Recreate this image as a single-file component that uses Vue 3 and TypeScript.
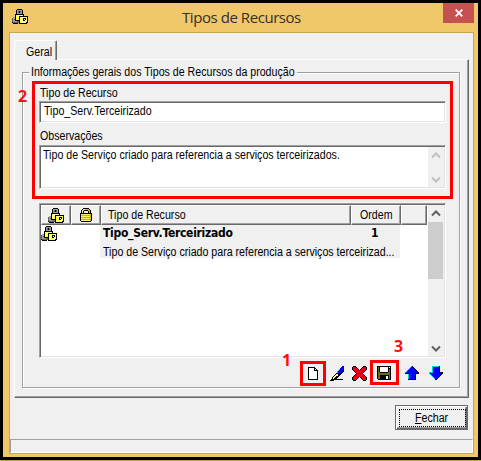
<script setup lang="ts">
interface Pixel {
  x: number
  y: number
  fill: string
}

const palette: Record<string, string> = {
  K: '#000000',
  G: '#a0a0a4',
  D: '#606060',
  Y: '#ffff50',
  W: '#ffffff',
  O: '#e0a820',
  L: '#fff27a',
  B: '#0000ff',
  C: '#00d0d8',
  R: '#e80018',
  M: '#6c6c10',
}

// Each icon is a small bitmap: one string per row, one palette letter per pixel.
const bitmaps: Record<string, string[]> = {
  resource: [
    '.....KKKKK......',
    '....KGGGGGK.....',
    '....KGDKDGK.....',
    '....KGDKDGK.....',
    '....KGGGGGK.....',
    '...KKKKKKKKK....',
    '...KYYWYYWYK....',
    '...KYWYKKKKKKKKK',
    '.GGKYYYKYYWYYWYK',
    'DGGKYWYKYWYKKKYK',
    'DGDKYYYKYYYKWKYK',
    'DGGKKKKKYWYKKYYK',
    'DGGGGDDKYYYYYWYK',
    'KDDDDDDKYYWYYYKK',
    '.KKKKK.KKKKKKKK.',
  ],
  lock: [
    '...KKKKKK...',
    '..KLLOOOOK..',
    '.KLOKKKKOOK.',
    '.KLK....KOK.',
    '.KLK....KOK.',
    'KKKKKKKKKKKK',
    'KLLLLLLYYYOK',
    'KOOOOOOOOOOK',
    'KLLLLLYYYYOK',
    'KOOOOOOOOOOK',
    'KLLLLLYYYYOK',
    'KOOOOOOOOOOK',
    'KLLLLYYYYYOK',
    '.KKKKKKKKKK.',
  ],
  page: [
    'KKKKKKK...',
    'KWWWWWKK..',
    'KWWWWWKWK.',
    'KWWWWWKKKK',
    'KWWWWWWWWK',
    'KWWWWWWWWK',
    'KWWWWWWWWK',
    'KWWWWWWWWK',
    'KWWWWWWWWK',
    'KWWWWWWWWK',
    'KWWWWWWWWK',
    'KWWWWWWWWK',
    'KKKKKKKKKK',
  ],
  pen: [
    '............BB',
    '...........BBB',
    '..........BBBB',
    '.........CBBBB',
    '........CBBBBK',
    '.......CBBBBBK',
    '.......CBBBBK.',
    '......KKBBKK..',
    '.....KLLKKK...',
    '....KLLLKK....',
    '...KLLKKK.....',
    '..KLLKKK......',
    '..KLKKK.......',
    '.KKKKKKKKKKKK.',
    'KKKK..........',
  ],
  remove: [
    '.KKK.......KKK.',
    'KRRRK.....KRRRK',
    'KRRRRK...KRRRRK',
    'KRRRRRK.KRRRRRK',
    '.KRRRRRKRRRRRK.',
    '..KRRRRRRRRRK..',
    '...KRRRRRRRK...',
    '....KRRRRRK....',
    '...KRRRRRRRK...',
    '..KRRRRRRRRRK..',
    '.KRRRRRKRRRRRK.',
    'KRRRRRK.KRRRRRK',
    'KRRRRK...KRRRRK',
    'KRRRK.....KRRRK',
    '.KKK.......KKK.',
  ],
  save: [
    'KKKKKKKKKKKKKK',
    'KMKWWWWWWWWKWK',
    'KMKWWWWWWWWKKK',
    'KMKWWWWWWWWKMK',
    'KMKWWWWWWWWKMK',
    'KMKWWWWWWWWKMK',
    'KMMKKKKKKKKMMK',
    'KMMMMMMMMMMMMK',
    'KMMMMMMMMMMMMK',
    'KMMKKKKKKKKKMK',
    'KMMKKKKKKWWKMK',
    'KMMKKKKKKWWKMK',
    'KMMKKKKKKWWKMK',
    '.KKKKKKKKKKKKK',
  ],
  up: [
    '......CK......',
    '.....CBBK.....',
    '....CBBBBK....',
    '...CBBBBBBK...',
    '..CBBBBBBBBK..',
    '.CBBBBBBBBBBK.',
    'CBBBBBBBBBBBBK',
    'KKKKBBBBBBKKKK',
    '...CBBBBBBK...',
    '...CBBBBBBK...',
    '...CBBBBBBK...',
    '...CBBBBBBK...',
    '...CBBBBBBK...',
    '...KKKKKKKK...',
  ],
  down: [
    '...CCCCCCCK...',
    '...CBBBBBBK...',
    '...CBBBBBBK...',
    '...CBBBBBBK...',
    '...CBBBBBBK...',
    '...CBBBBBBK...',
    'CCCCBBBBBBKKKK',
    'CBBBBBBBBBBBBK',
    '.CBBBBBBBBBBK.',
    '..CBBBBBBBBK..',
    '...CBBBBBBK...',
    '....CBBBBK....',
    '.....CBBK.....',
    '......KK......',
  ],
}

function pixels(name: string): Pixel[] {
  return bitmaps[name].flatMap((row, y) =>
    [...row].map((c, x) => ({ x, y, fill: palette[c] ?? '' })).filter((p) => p.fill !== ''),
  )
}

const tools: string[] = ['page', 'pen', 'remove', 'save', 'up', 'down']
</script>

<template>
  <div class="frame">
    <div class="window">
      <header class="titlebar">
        <svg class="px app-icon" width="16" height="15">
          <rect v-for="(p, i) in pixels('resource')" :key="i" :x="p.x" :y="p.y" width="1" height="1" :fill="p.fill" />
        </svg>
        <h1>Tipos de Recursos</h1>
        <button class="close" aria-label="Fechar janela">
          <svg width="8" height="8" viewBox="0 0 8 8"><path d="M.7 .7 7.3 7.3M7.3 .7 .7 7.3" stroke="#fff" stroke-width="1.8" /></svg>
        </button>
      </header>
      <main class="client">
        <div class="tab"><span class="t">Geral</span></div>
        <section class="panel">
          <div class="group">
            <div class="legend"><span class="t">Informações gerais dos Tipos de Recursos da produção</span></div>
            <label class="caption"><span class="t">Tipo de Recurso</span></label>
            <div class="sunken input"><span class="t">Tipo_Serv.Terceirizado</span></div>
            <label class="caption obs"><span class="t">Observações</span></label>
            <div class="sunken memo">
              <span class="t">Tipo de Serviço criado para referencia a serviços terceirizados.</span>
              <div class="scroll off">
                <svg width="10" height="7"><path d="M1 5.5 5 1.5 9 5.5" /></svg>
                <svg width="10" height="7"><path d="M1 1.5 5 5.5 9 1.5" /></svg>
              </div>
            </div>
            <div class="sunken list">
              <div class="table">
                <div class="row head">
                  <div class="cell">
                    <svg class="px" width="16" height="15">
                      <rect v-for="(p, i) in pixels('resource')" :key="i" :x="p.x" :y="p.y" width="1" height="1" :fill="p.fill" />
                    </svg>
                  </div>
                  <div class="cell">
                    <svg class="px" width="12" height="14">
                      <rect v-for="(p, i) in pixels('lock')" :key="i" :x="p.x" :y="p.y" width="1" height="1" :fill="p.fill" />
                    </svg>
                  </div>
                  <div class="cell name"><span class="t">Tipo de Recurso</span></div>
                  <div class="cell order"><span class="t">Ordem</span></div>
                  <div class="cell"></div>
                </div>
                <div class="item">
                  <svg class="px" width="16" height="15">
                    <rect v-for="(p, i) in pixels('resource')" :key="i" :x="p.x" :y="p.y" width="1" height="1" :fill="p.fill" />
                  </svg>
                  <div class="detail">
                    <div class="first"><b>Tipo_Serv.Terceirizado</b><b class="num">1</b></div>
                    <div class="second"><span class="t">Tipo de Serviço criado para referencia a serviços terceirizad...</span></div>
                  </div>
                </div>
              </div>
              <div class="scroll">
                <svg width="10" height="7"><path d="M1 5.5 5 1.5 9 5.5" /></svg>
                <div class="thumb"></div>
                <svg width="10" height="7"><path d="M1 1.5 5 5.5 9 1.5" /></svg>
              </div>
            </div>
            <div class="tools">
              <div v-for="name in tools" :key="name" class="tool" :class="name">
                <svg class="px" width="15" height="15">
                  <rect v-for="(p, i) in pixels(name)" :key="i" :x="p.x" :y="p.y" width="1" height="1" :fill="p.fill" />
                </svg>
              </div>
            </div>
          </div>
        </section>
        <div class="actions">
          <button class="fechar"><span class="focus"><span class="t"><u>F</u>echar</span></span></button>
        </div>
        <footer class="status"></footer>
      </main>
    </div>
    <div class="mark fields"></div>
    <div class="mark new"></div>
    <div class="mark disk"></div>
    <span class="no n1">1</span>
    <span class="no n2">2</span>
    <span class="no n3">3</span>
  </div>
</template>

<style>
body {
  background: #c5a250;
}
</style>

<style scoped>
* {
  box-sizing: border-box;
}
.frame {
  position: relative;
  width: 481px;
  height: 460px;
  padding: 3px;
  background: #000;
  font: 12px/14px "Liberation Sans", sans-serif;
  color: #000;
}
.window {
  height: 454px;
  background: #f0c869;
  padding: 0 4px 4px 6px;
}
.titlebar {
  height: 29px;
  display: flex;
  align-items: flex-start;
}
.px {
  display: block;
  shape-rendering: crispEdges;
}
.app-icon {
  margin: 6px 0 0 3px;
}
h1 {
  flex: 1;
  margin: 4px 0 0 154px;
  font: 15px/21px "Open Sans", sans-serif;
  letter-spacing: -0.44px;
  color: #33302a;
  white-space: nowrap;
}
button {
  border: 0;
  padding: 0;
  font: inherit;
  border-radius: 0;
}
.close {
  width: 31px;
  height: 20px;
  background: #c75050;
  display: flex;
  align-items: center;
  justify-content: center;
}
.client {
  height: 422px;
  width: 465px;
  border: 1px solid #c9a552;
  background: #f0f0f0;
  padding: 7px 0 0 4px;
  display: flex;
  flex-direction: column;
}
.t {
  display: inline-block;
  white-space: nowrap;
  transform: scaleX(0.886);
  transform-origin: 0 0;
}
.tab {
  position: relative;
  width: 43px;
  height: 20px;
  margin-bottom: -1px;
  padding: 4px 0 0 11px;
  border: 1px solid #fff;
  border-right-color: #696969;
  border-bottom: 0;
  border-radius: 3px 2px 0 0;
  box-shadow: inset -1px 0 #a0a0a0;
  background: #f0f0f0;
}
.panel {
  width: 455px;
  height: 339px;
  padding: 12px 0 0 7px;
  border: 1px solid #fff;
  border-right-color: #696969;
  border-bottom-color: #696969;
  box-shadow: inset -1px -1px #a0a0a0;
}
.group {
  width: 438px;
  height: 316px;
  border: 1px solid #a0a0a0;
  box-shadow: 1px 1px #fff, inset 1px 1px #fff;
  padding: 0 0 0 16px;
}
.legend {
  width: 268px;
  height: 14px;
  margin: -8px 0 0 -10px;
  padding-left: 2px;
  background: #f0f0f0;
}
.caption {
  display: block;
  height: 14px;
  margin-top: 7px;
  padding-left: 1px;
}
.sunken {
  width: 407px;
  border: 1px solid #a0a0a0;
  border-right-color: #fff;
  border-bottom-color: #fff;
  background: #fff;
  box-shadow: inset 1px 1px #696969, inset -1px -1px #e3e3e3;
}
.input {
  height: 22px;
  margin-top: 1px;
  padding: 2px 0 0 4px;
}
.caption.obs {
  margin-top: 6px;
}
.memo {
  height: 44px;
  margin-top: 2px;
  padding: 1px 1px 1px 3px;
  display: flex;
  justify-content: space-between;
}
.memo > .t {
  margin-top: 1px;
  width: 370px;
}
.scroll {
  width: 16px;
  flex: none;
  background: #f0f0f0;
  display: flex;
  flex-direction: column;
  align-items: center;
  padding: 5px 1px 4px 0;
}
.scroll svg {
  flex: none;
  fill: none;
  stroke: #606060;
  stroke-width: 2;
}
.scroll.off {
  justify-content: space-between;
}
.scroll.off svg {
  stroke: #bfbfbf;
}
.list {
  height: 155px;
  margin-top: 14px;
  padding: 1px;
  display: flex;
}
.list .scroll {
  justify-content: flex-start;
}
.list .scroll svg:last-child {
  margin-top: auto;
}
.thumb {
  width: 15px;
  height: 57px;
  margin-top: 5px;
  background: #cdcdcd;
}
.table {
  width: 387px;
}
.row {
  display: grid;
  grid-template-columns: 30px 30px 250px 50px 26px;
  height: 20px;
}
.cell {
  background: #f0f0f0;
  border: 1px solid #fff;
  border-right-color: #696969;
  border-bottom-color: #696969;
  box-shadow: inset -1px -1px #a0a0a0;
  display: flex;
  align-items: center;
  justify-content: center;
}
.cell.name {
  justify-content: flex-start;
  padding-left: 6px;
}
.cell.order .t {
  margin-right: -4px;
}
.item {
  display: flex;
  padding-top: 1px;
}
.detail {
  width: 300px;
  height: 33px;
  margin-left: 43px;
  margin-top: -1px;
  padding: 1px 0 0 3px;
  background: #f0f0f0;
}
.first,
.second {
  display: flex;
}
.first b {
  width: 268px;
  font: bold 12px/14px "DejaVu Sans Condensed", "DejaVu Sans", sans-serif;
  font-stretch: condensed;
  letter-spacing: -0.28px;
}
.first .num {
  width: auto;
}
.second {
  margin-top: 5px;
}
.tools {
  display: flex;
  height: 26px;
  margin: 6px 0 0 268px;
}
.tool {
  width: 22px;
  padding-top: 1px;
}
.tool.page {
  width: 23px;
  padding: 2px 0 0 1px;
}
.tool.remove {
  width: 25px;
}
.tool.save {
  width: 28px;
}
.tool.up {
  width: 24px;
}
.tool svg {
  margin-top: 1px;
}
.actions {
  margin: 7px 0 0 381px;
}
.fechar {
  display: block;
  width: 73px;
  height: 25px;
  padding: 2px;
  border: 1px solid #696969;
  background: #f0f0f0;
  box-shadow: inset 1px 1px #fff, inset -1px -1px #696969, inset -2px -2px #a0a0a0;
}
.focus {
  display: block;
  width: 67px;
  height: 18px;
  margin: 1px;
  padding: 1px 0 0 15px;
  border: 1px dotted #000;
  text-align: left;
}
.status {
  height: 14px;
  margin: 9px 0 0 -4px;
  border: 1px solid #a0a0a0;
  border-right-color: #fff;
  border-bottom-color: #fff;
}
.mark {
  position: absolute;
  border: 3px solid #f00;
}
.fields {
  left: 32px;
  top: 81px;
  width: 421px;
  height: 118px;
}
.new {
  left: 300px;
  top: 361px;
  width: 26px;
  height: 25px;
}
.disk {
  left: 370px;
  top: 360px;
  width: 29px;
  height: 25px;
}
.no {
  position: absolute;
  font: bold 16px/16px "Open Sans", sans-serif;
  color: #fb1010;
}
.n1 {
  left: 282px;
  top: 352px;
}
.n2 {
  left: 18px;
  top: 88px;
}
.n3 {
  left: 394px;
  top: 338px;
}
</style>
